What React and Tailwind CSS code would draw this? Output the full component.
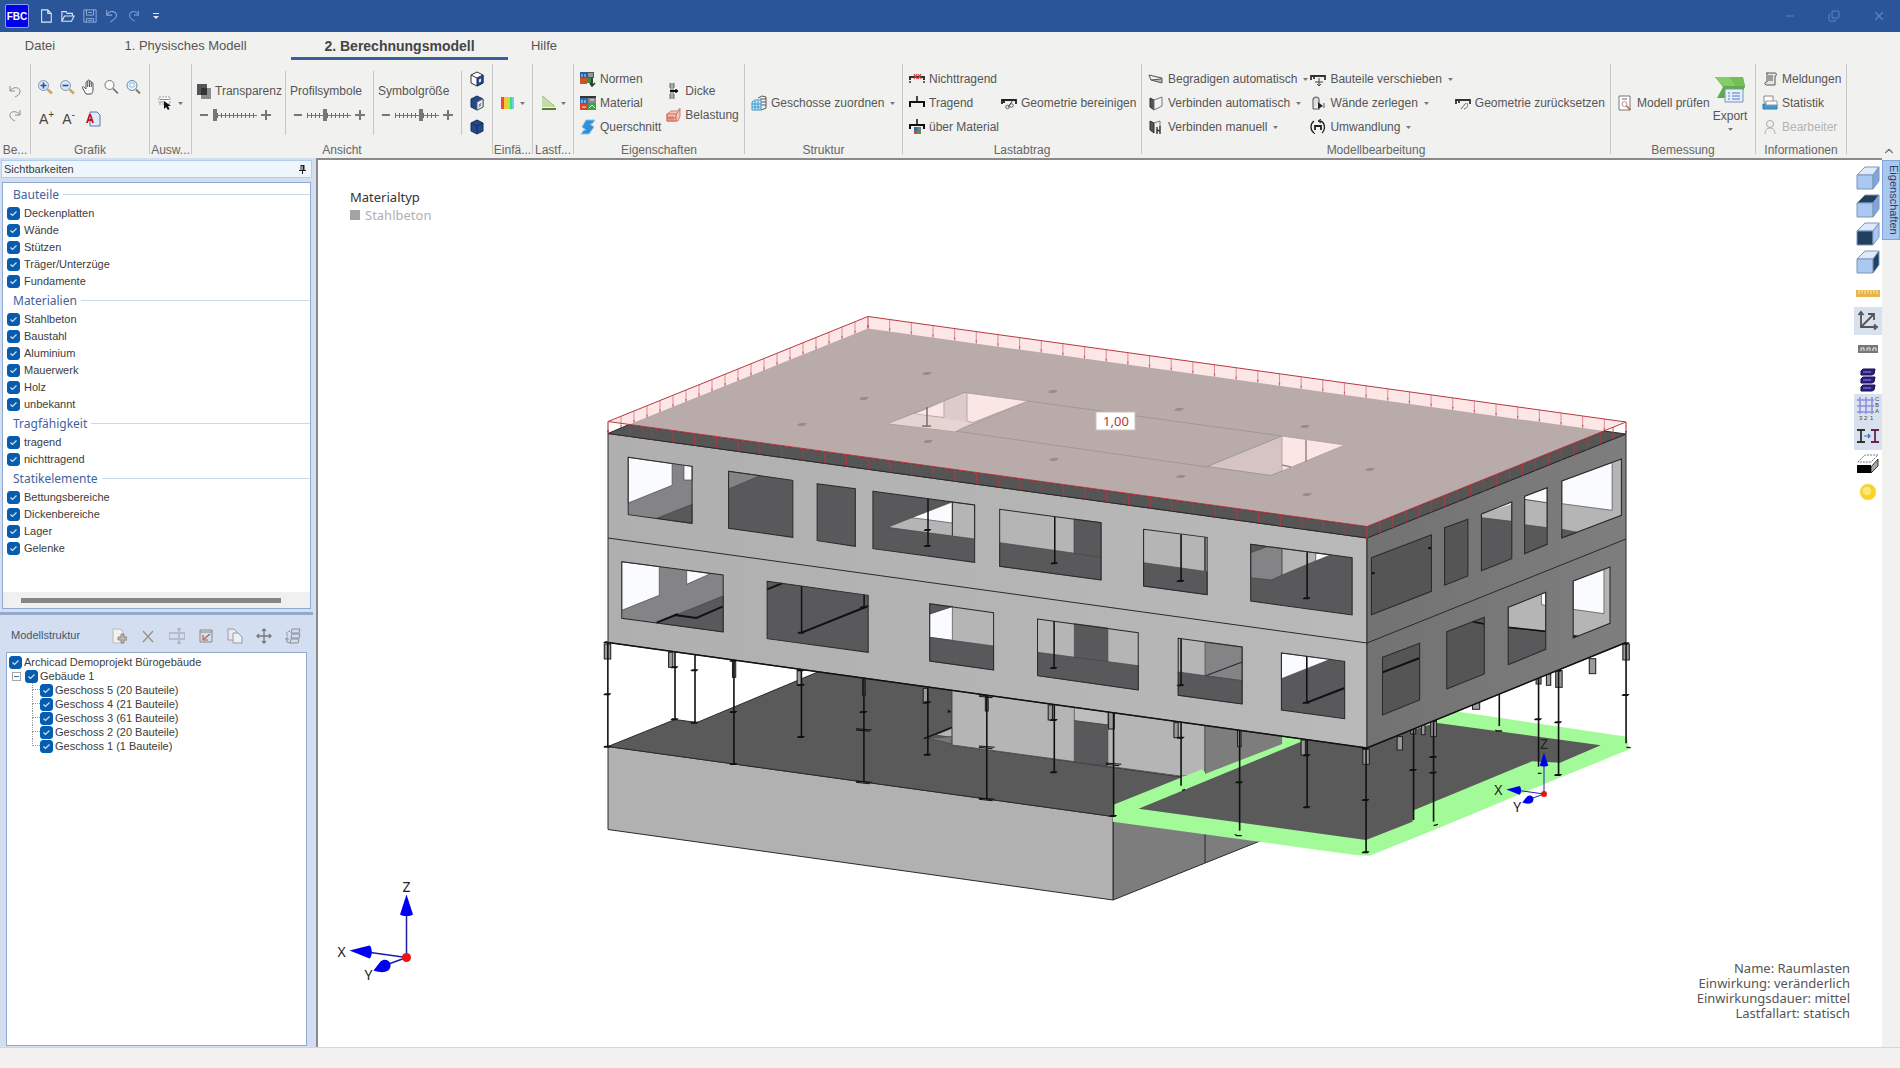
import { useState } from 'react';
import { ChevronUp, Copy, Minus, X } from 'lucide-react';

const DARK = '#59595b';
const MID = '#848486';
const LIGHT = '#b5b5b6';
const SKY = '#fafbff';
const LINE = '#2a2a2a';

/* ---------- small icons ---------- */

function Icon({ size = 16, children }) {
  return (
    <svg
      width={size}
      height={size}
      viewBox="0 0 16 16"
      fill="none"
      stroke="#666"
      strokeWidth="1"
      className="shrink-0"
      aria-hidden="true"
    >
      {children}
    </svg>
  );
}

const icons = {
  file: <path d="M3 1h7l4 4v10H3zM10 1v4h4" stroke="#dfe8f5" strokeWidth="1.2" />,
  open: <path d="M1 14V3h5l1 2h6v3M1 14L4 8h11l-3 6z" stroke="#dfe8f5" strokeWidth="1.2" />,
  save: <path d="M1 1h14v14H1zM4 1v6h8V1M4 15v-4h8v4M6 13h4M6 4h4" stroke="#9db6dc" />,
  undoLight: <path d="M2 1v6h6M2 7c3-6 12-5 11 1c-.5 3-4 5-7 7" stroke="#8ba9d6" strokeWidth="1.2" />,
  redoLight: <path d="M13 2v5H8M13 7C11 1 2 2 3 8c.5 3 4 5 6 6" stroke="#7398cf" strokeWidth="1.2" />,
  undo: <path d="M3 3v5h5M3 8c3-5 11-4 10 1c-.5 3-3 4-5 5" stroke="#8c8c8c" />,
  redo: <path d="M13 3v5H8M13 8C10 3 2 4 3 9c.5 3 3 4 5 5" stroke="#8c8c8c" />,
  zoomIn: (
    <>
      <path d="M10.500 10.500l4.500 4" stroke="#caa763" strokeWidth="2.600" />
      <circle cx="6.500" cy="6.500" r="5" fill="#d6e6fa" stroke="#8797b5" />
      <path d="M3.500 6.500h6M6.500 3.500v6" stroke="#2b4f9c" strokeWidth="1.600" />
    </>
  ),
  zoomOut: (
    <>
      <path d="M10.500 10.500l4.500 4" stroke="#caa763" strokeWidth="2.600" />
      <circle cx="6.500" cy="6.500" r="5" fill="#d6e6fa" stroke="#8797b5" />
      <path d="M3.500 6.500h6" stroke="#2b4f9c" strokeWidth="1.600" />
    </>
  ),
  hand: (
    <path
      d="M5 15L1.500 9c-.5-1.500 1-2 2-.5L5 10V3.500c0-1.300 1.700-1.300 1.700 0V2c0-1.300 1.800-1.300 1.800 0v1c0-1.300 1.800-1.300 1.800 0v1.500c0-1.200 1.700-1.200 1.700 0V11c0 2-1 3-1.500 4zM6.700 3.500V8M8.500 3v5M10.300 4v4"
      fill="#f8f8f8"
      stroke="#555"
    />
  ),
  zoom: (
    <>
      <circle cx="6.500" cy="6" r="4.500" fill="#fafafa" stroke="#777" />
      <path d="M10 9.500l5 5" stroke="#666" strokeWidth="1.600" />
    </>
  ),
  zoomFit: (
    <>
      <circle cx="7" cy="6.500" r="5" fill="#e6f3fb" stroke="#6487a8" />
      <path d="M4.500 6.500h5M7 4v5" stroke="#fff" strokeWidth="1.500" />
      <path d="M5 4h4v4H5z" stroke="#8fc0dd" />
      <path d="M11 10.500l4 4" stroke="#8a7a60" strokeWidth="2" />
    </>
  ),
  fontColor: (
    <>
      <path d="M5 1h7l3 3v11H5z" fill="#dfe9fa" stroke="#5a76b8" />
      <path d="M1 12L4 3h2l3 9H7l-.5-2h-3L3 12zM4 8h2L5 5z" fill="#c01818" stroke="none" />
    </>
  ),
  select: (
    <>
      <path d="M1 2h11v7H1z" stroke="#999" strokeDasharray="2 1" fill="#fff" />
      <path d="M2 4.500h9M2 7h4" stroke="#888" />
      <path d="M6 6v8l2-2 2 3 1.500-1-1.500-3h3z" fill="#111" stroke="none" />
    </>
  ),
  transparency: (
    <>
      <path d="M5 5h10v11H5z" fill="#8c8c8c" stroke="none" />
      <path d="M1 1h10v11H1z" fill="#555" stroke="none" />
      <path d="M5 5h6v7H5z" fill="#333" stroke="none" />
    </>
  ),
  cubeOpen: (
    <>
      <path d="M2 4l6-3 6 3v8l-6 3-6-3z" fill="#fff" stroke="#333" />
      <path d="M8 7l6-3v8l-6 3z" fill="#2a4d8c" stroke="#1b3059" />
      <path d="M10 8.500l2-1v3l-2 1z" fill="#e8eefa" stroke="none" />
      <path d="M2 4l6 3" stroke="#333" />
    </>
  ),
  cubeHalf: (
    <>
      <path d="M2 4l6-3 6 3v8l-6 3-6-3z" fill="#214a8e" stroke="#172f58" />
      <path d="M8 7l6-3v8l-6 3z" fill="#e9edf5" />
      <path d="M10 9l2 2m0-3l-2 4" stroke="#777" />
    </>
  ),
  cubeFull: (
    <>
      <path d="M2 4l6-3 6 3v8l-6 3-6-3z" fill="#214a8e" stroke="#172f58" />
      <path d="M2 4l6 3 6-3M8 7v8" stroke="#172f58" />
    </>
  ),
  rainbow: (
    <>
      <path d="M1 2h3v12H1z" fill="#f0483c" stroke="none" />
      <path d="M4 2h3v12H4z" fill="#f7c531" stroke="none" />
      <path d="M7 2h3v12H7z" fill="#a7ee3c" stroke="none" />
      <path d="M10 2h2v12h-2z" fill="#3fd98c" stroke="none" />
      <path d="M12 2h2v12h-2z" fill="#6cd0e8" stroke="none" />
    </>
  ),
  loadCase: (
    <>
      <path d="M2 1v11M4 3v9M6 5v7M8 6v6M10 8v4M12 9v3M2 1l12 11" stroke="#9bc567" />
      <path d="M1 13h14v2H1z" fill="#5c7a3c" stroke="none" />
    </>
  ),
  norms: (
    <>
      <path d="M0 1h7v6H0z" fill="#2c5f9e" stroke="none" />
      <path d="M7 1h7v6H7z" fill="#555" stroke="none" />
      <path d="M0 7h7v6H0z" fill="#c9552d" stroke="none" />
      <path d="M7 7h6v5H7z" fill="#3c8c46" stroke="none" />
      <path d="M8 3h5M8 5h5M2 3v3M5 3v3" stroke="#cfd8e6" />
      <path d="M12 7v8M10 12l2 3 3-3" stroke="#1c3d22" strokeWidth="1.600" />
    </>
  ),
  material: (
    <>
      <path d="M0 1h16v2H0z" fill="#333" stroke="none" />
      <path d="M0 3h8v6H0z" fill="#2c6bb0" stroke="none" />
      <path d="M8 3h8v5H8z" fill="#888" stroke="none" />
      <path d="M0 9h8v6H0z" fill="#d4472a" stroke="none" />
      <path d="M8 8h8v7H8z" fill="#3aa544" stroke="none" />
      <path d="M9 13l3-3 3 3M2 5v3M5 5v3M10 5h4M2 12h4" stroke="#e8eef4" />
    </>
  ),
  section: (
    <path d="M6 1h9l-3 4h-2l4 3-5 7H1l3-4h2L2 8z" fill="#2f8fd8" stroke="#8cc4ee" />
  ),
  thickness: (
    <>
      <path d="M5 0h4v16H5z" fill="#a9a9a9" stroke="none" />
      <path d="M5 8h8" stroke="#111" strokeWidth="2" />
      <path d="M5 0v5M5 11v5M9 0v5M9 11v5" stroke="#666" />
      <path d="M11 6v4" stroke="#111" strokeWidth="1.500" />
    </>
  ),
  load: (
    <>
      <path d="M2 7l4-3h6l3-3v8l-2 5H2z" fill="#f3c4bd" stroke="#d98174" />
      <path d="M2 7h9v7H2zM11 7l4-4M4 9v4M6 9v4M8 9v4M2 11h9" stroke="#d06a5b" />
    </>
  ),
  storeys: (
    <>
      <path d="M7 3l4-2 4 1v11l-5 2" fill="#f4f4f4" stroke="#555" />
      <path d="M9 4h6M9 7h6M9 10h6" stroke="#555" />
      <path d="M1 7l3-2h6v10H1z" fill="#cfe8fa" stroke="#3f95cc" />
      <path d="M1 9h9M1 12h9M4 6v9M7 6v9" stroke="#3f95cc" />
    </>
  ),
  nonBearing: (
    <>
      <path d="M0 6h16M1 7v2M15 7v2" stroke="#333" strokeWidth="2" />
      <path d="M1 10v2M15 10v2" stroke="#333" strokeWidth="1.500" />
      <path d="M5 3l3 5M8 3L5 8M9 3l3 5M12 3L9 8" stroke="#e04545" strokeWidth="1.300" />
    </>
  ),
  bearing: (
    <>
      <path d="M1 12V7h14v5" stroke="#111" strokeWidth="2" />
      <path d="M8 7V1" stroke="#111" strokeWidth="1.500" />
    </>
  ),
  byMaterial: (
    <>
      <path d="M1 10V6h14v4" stroke="#111" strokeWidth="2" />
      <path d="M8 6V0" stroke="#111" strokeWidth="1.500" />
      <path d="M5 8h3v4H5z" fill="#2c6bb0" stroke="none" />
      <path d="M8 8h4v4H8z" fill="#777" stroke="none" />
      <path d="M5 12h3v3H5z" fill="#d4472a" stroke="none" />
      <path d="M8 12h4v3H8z" fill="#3aa544" stroke="none" />
    </>
  ),
  cleanGeometry: (
    <>
      <path d="M1 9V5h14v4M3 5v3" stroke="#222" strokeWidth="1.800" />
      <path d="M12 5L7 12" stroke="#333" />
      <circle cx="6.500" cy="12" r="1.800" />
      <circle cx="10.500" cy="10.500" r="1.800" />
    </>
  ),
  straighten: <path d="M1 4l13 3v5L3 9l10-1M3 9l-2-5" fill="#bbb" stroke="#555" />,
  connectAuto: (
    <>
      <path d="M2 3l4 2v10l-4-3z" fill="#555" stroke="#333" />
      <path d="M6 5l8-3v9l-8 4z" fill="#f3f3f3" stroke="#777" />
    </>
  ),
  connectManual: (
    <>
      <path d="M2 2l4 2v10l-4-3z" fill="#555" stroke="#333" />
      <path d="M6 4l6-2v6" stroke="#777" />
      <path d="M9 15V8M9 11l3 1v3M12 7v8" stroke="#333" strokeWidth="1.400" />
    </>
  ),
  move: (
    <>
      <path d="M1 9V5h14v4M4 5v3" stroke="#333" strokeWidth="1.800" />
      <path d="M9 7v8M5 11h8M7 13l2 2 2-2" stroke="#444" />
    </>
  ),
  split: (
    <>
      <path d="M3 14V5c0-3 5-4 6-1v4" fill="#ddd" stroke="#777" strokeWidth="1.300" />
      <path d="M8 7v7l5-3z" fill="#222" stroke="none" />
      <path d="M14 8v5M3 14h7" stroke="#555" />
    </>
  ),
  convert: (
    <>
      <path d="M4 2C0 5 0 11 4 14M9 2c6 0 7 8 3 12" stroke="#222" strokeWidth="1.300" />
      <path d="M11 4L8 2l3-2M2 12l3 3" stroke="#222" />
      <path d="M5 11V7h6v4" stroke="#222" strokeWidth="1.800" />
    </>
  ),
  resetGeometry: (
    <>
      <path d="M1 9V5h14v4M4 5v3" stroke="#333" strokeWidth="1.800" />
      <path d="M6 14l5-6M9 14c4-1 4-4 3-6" stroke="#666" />
    </>
  ),
  check: (
    <>
      <path d="M2 1h11v14H2z" fill="#fff" stroke="#777" />
      <circle cx="7.500" cy="9" r="2.500" stroke="#b98a7e" />
      <path d="M9.500 11l4 4" stroke="#cc5a48" strokeWidth="1.600" />
      <path d="M5 4h5" />
    </>
  ),
  messages: (
    <>
      <path d="M4 2h9c2 0 2 3 0 3v9H5c-3 0-3-3 0-3h0V2" fill="#e6e6e6" stroke="#555" />
      <path d="M6 5h5M6 7h5M6 9h5" stroke="#555" />
    </>
  ),
  stats: (
    <>
      <path d="M2 1h9v6H2z" fill="#fff" stroke="#888" />
      <path d="M1 9h14v5H1z" fill="#3c9bd2" stroke="#2f7fb0" />
      <path d="M4 6h11v4H4z" fill="#fff" stroke="#999" />
    </>
  ),
  person: (
    <>
      <circle cx="8" cy="5" r="3.500" stroke="#aaa" />
      <path d="M3 15c0-4 2-6 5-6s5 2 5 6" stroke="#aaa" />
    </>
  ),
  newItem: (
    <>
      <path d="M2 1h7l3 3v11H2z" fill="#f4f2ef" stroke="#bdb6b0" />
      <path d="M10 6h3v3h3v3h-3v3h-3v-3H7V9h3z" fill="#b9b3ae" stroke="#8f8a86" />
    </>
  ),
  remove: <path d="M3 3l10 11M13 3L3 14" stroke="#9c9691" strokeWidth="1.500" />,
  rename: <path d="M9 5H0v6h9M11 5h5v6h-5M10 1v14M8 1h4M8 15h4" stroke="#9a9aa2" />,
  restore: (
    <>
      <path d="M2 2h12v12H2zM2 4h12" stroke="#8d8886" />
      <path d="M12 6L6 11M5 7v5h5" stroke="#b0604a" strokeWidth="1.200" />
    </>
  ),
  copy: (
    <>
      <path d="M1 1h6l3 3v8H1z" fill="#e8e9ee" stroke="#9a9aa2" />
      <path d="M6 5h5l4 4v6H6z" fill="#eef0f5" stroke="#9a9aa2" />
    </>
  ),
  moveAll: (
    <path d="M8 1v14M1 8h14M6 3l2-2 2 2M6 13l2 2 2-2M3 6L1 8l2 2M13 6l2 2-2 2" stroke="#77777f" strokeWidth="1.300" />
  ),
  stack: (
    <path
      d="M7 1h8l-1 4H6zM7 6h8l-1 4H6zM6 11h8l-1 4H5zM5 3C1 3 1 8 3 8M0 11h4M2 9v5l3 1"
      stroke="#8d8d96"
    />
  ),
};

function Caret() {
  return (
    <svg width="5" height="3" viewBox="0 0 5 3" className="shrink-0" aria-hidden="true">
      <path d="M0 0h5L2.500 3z" fill="#777" />
    </svg>
  );
}

function IconButton({ name, label, size = 16, caret }) {
  return (
    <button type="button" aria-label={label} className="flex items-center gap-1">
      <Icon size={size}>{icons[name]}</Icon>
      {caret && <Caret />}
    </button>
  );
}

/* ---------- ribbon ---------- */

function Group({ title, className, children }) {
  return (
    <section className={`flex shrink-0 ${className}`}>
      <div className="flex min-w-0 flex-1 flex-col">
        <div className="flex h-[78px] items-center">{children}</div>
        <h2 className="h-4 text-center leading-4 whitespace-nowrap text-[#666]">{title}</h2>
      </div>
      <div className="h-[90px] w-px bg-[#c6c6c6]" />
    </section>
  );
}

function Command({ icon, children, caret, disabled }) {
  return (
    <button
      type="button"
      disabled={disabled}
      className="flex h-6 items-center gap-1 whitespace-nowrap text-[#555] disabled:text-[#b4b4b4]"
    >
      <Icon>{icons[icon]}</Icon>
      <span>{children}</span>
      {caret && <span className="pl-[2px]"><Caret /></span>}
    </button>
  );
}

function ScaleSlider({ label, icon, initial, className }) {
  const [value, setValue] = useState(initial);
  const id = `scale-${label}`;

  return (
    <div className={`flex h-16 shrink-0 flex-col justify-center border-r border-[#c6c6c6] pl-1 ${className}`}>
      <label htmlFor={id} className="flex h-6 items-center gap-[3px] whitespace-nowrap text-[#555]">
        {icon && <Icon>{icons[icon]}</Icon>}
        {label}
      </label>
      <div className="flex h-6 items-center gap-1 pl-[3px]">
        <button type="button" aria-label={`${label} -`} onClick={() => setValue(Math.max(0, value - 1))}>
          <svg width="10" height="10" viewBox="0 0 10 10" aria-hidden="true">
            <path d="M1 5h8" stroke="#777" strokeWidth="2" />
          </svg>
        </button>
        <div className="grid w-[44px] items-center">
          <div className="col-start-1 row-start-1 h-[5px] bg-[repeating-linear-gradient(90deg,#666_0_1px,transparent_1px_4px)]">
            <div className="h-[3px] border-b border-[#777]" />
          </div>
          <input
            id={id}
            type="range"
            min="0"
            max="10"
            value={value}
            onChange={(e) => setValue(Number(e.target.value))}
            className="col-start-1 row-start-1 h-3 w-full appearance-none bg-transparent [&::-webkit-slider-thumb]:h-3 [&::-webkit-slider-thumb]:w-1 [&::-webkit-slider-thumb]:appearance-none [&::-webkit-slider-thumb]:bg-[#777]"
          />
        </div>
        <button type="button" aria-label={`${label} +`} onClick={() => setValue(Math.min(10, value + 1))}>
          <svg width="10" height="10" viewBox="0 0 10 10" aria-hidden="true">
            <path d="M5 0v10M0 5h10" stroke="#777" strokeWidth="2" />
          </svg>
        </button>
      </div>
    </div>
  );
}

function Ribbon() {
  return (
    <div className="flex items-start pt-1 text-[12px]">
      <Group title="Be..." className="w-[31px]">
        <div className="flex w-full flex-col items-center gap-2">
          <IconButton name="undo" label="Rückgängig" />
          <IconButton name="redo" label="Wiederholen" />
        </div>
      </Group>
      <Group title="Grafik" className="w-[119px]">
        <div className="flex flex-col gap-4 pl-1">
          <div className="flex gap-[6px] pl-[2px]">
            <IconButton name="zoomIn" label="Vergrößern" />
            <IconButton name="zoomOut" label="Verkleinern" />
            <IconButton name="hand" label="Verschieben" />
            <IconButton name="zoom" label="Lupe" />
            <IconButton name="zoomFit" label="Alles zeigen" />
          </div>
          <div className="flex items-center gap-2 pl-1 text-[14px] leading-4 text-[#444]">
            <button type="button" className="flex items-start">
              A<span className="text-[10px] leading-2">+</span>
            </button>
            <button type="button" className="flex items-start pr-[2px]">
              A<span className="text-[10px] leading-2">-</span>
            </button>
            <IconButton name="fontColor" label="Schriftfarbe" />
          </div>
        </div>
      </Group>
      <Group title="Ausw..." className="w-[42px]">
        <div className="flex w-full justify-center">
          <IconButton name="select" label="Auswahl" caret />
        </div>
      </Group>
      <Group title="Ansicht" className="w-[301px]">
        <div className="flex w-full items-center">
          <ScaleSlider label="Transparenz" icon="transparency" initial={0} className="w-[94px]" />
          <ScaleSlider label="Profilsymbole" initial={4} className="w-[88px]" />
          <ScaleSlider label="Symbolgröße" initial={6} className="w-[88px]" />
          <div className="flex flex-1 flex-col items-center gap-2">
            <IconButton name="cubeOpen" label="Drahtmodell" />
            <IconButton name="cubeHalf" label="Halbtransparent" />
            <IconButton name="cubeFull" label="Vollmodell" />
          </div>
        </div>
      </Group>
      <Group title="Einfä..." className="w-[40px]">
        <div className="flex w-full justify-center">
          <IconButton name="rainbow" label="Einfärben" caret />
        </div>
      </Group>
      <Group title="Lastf..." className="w-[41px]">
        <div className="flex w-full justify-center">
          <IconButton name="loadCase" label="Lastfall" caret />
        </div>
      </Group>
      <Group title="Eigenschaften" className="w-[171px]">
        <div className="flex items-center gap-1 pl-[6px]">
          <div>
            <Command icon="norms">Normen</Command>
            <Command icon="material">Material</Command>
            <Command icon="section">Querschnitt</Command>
          </div>
          <div>
            <Command icon="thickness">Dicke</Command>
            <Command icon="load">Belastung</Command>
          </div>
        </div>
      </Group>
      <Group title="Struktur" className="w-[158px]">
        <div className="pl-[6px]">
          <Command icon="storeys" caret>Geschosse zuordnen</Command>
        </div>
      </Group>
      <Group title="Lastabtrag" className="w-[239px]">
        <div className="flex items-center gap-[2px] pl-[6px]">
          <div>
            <Command icon="nonBearing">Nichttragend</Command>
            <Command icon="bearing">Tragend</Command>
            <Command icon="byMaterial">über Material</Command>
          </div>
          <Command icon="cleanGeometry">Geometrie bereinigen</Command>
        </div>
      </Group>
      <Group title="Modellbearbeitung" className="w-[469px]">
        <div className="flex items-center gap-[2px] pl-[6px]">
          <div>
            <Command icon="straighten" caret>Begradigen automatisch</Command>
            <Command icon="connectAuto" caret>Verbinden automatisch</Command>
            <Command icon="connectManual" caret>Verbinden manuell</Command>
          </div>
          <div>
            <Command icon="move" caret>Bauteile verschieben</Command>
            <Command icon="split" caret>Wände zerlegen</Command>
            <Command icon="convert" caret>Umwandlung</Command>
          </div>
          <Command icon="resetGeometry">Geometrie zurücksetzen</Command>
        </div>
      </Group>
      <Group title="Bemessung" className="w-[145px]">
        <div className="flex items-center gap-[3px] pl-[6px]">
          <Command icon="check">Modell prüfen</Command>
          <button type="button" className="flex flex-col items-center gap-1 leading-4 text-[#555]">
            <svg width="30" height="28" viewBox="0 0 30 28" aria-hidden="true">
              <path d="M0 1h14l3 1h11l2 9-6 11H2l6-11z" fill="#5fae45" />
              <path d="M0 1h15l6 9H8z" fill="#86cc68" />
              <path d="M15 1h13l2 9h-9z" fill="#73bf55" />
              <path d="M10 13h18v13H10z" fill="#e6eefb" stroke="#7f95b8" />
              <path d="M13 17h2M17 17h8M13 20h2M17 20h8M13 23h2M17 23h8" stroke="#4a79c0" />
            </svg>
            Export
            <Caret />
          </button>
        </div>
      </Group>
      <Group title="Informationen" className="w-[91px]">
        <div className="pl-[6px]">
          <Command icon="messages">Meldungen</Command>
          <Command icon="stats">Statistik</Command>
          <Command icon="person" disabled>Bearbeiter</Command>
        </div>
      </Group>
      <button type="button" aria-label="Menüband einklappen" className="mt-20 mr-1 ml-auto">
        <ChevronUp size={14} color="#777" />
      </button>
    </div>
  );
}

/* ---------- left side ---------- */

function CheckBox({ children }) {
  return (
    <label className="flex items-center gap-1 whitespace-nowrap">
      <span className="grid h-[13px] w-[13px] shrink-0">
        <input
          type="checkbox"
          defaultChecked
          className="peer col-start-1 row-start-1 h-[13px] w-[13px] appearance-none rounded-[3px] border border-[#005fb8] checked:bg-[#0a5cab]"
        />
        <svg
          viewBox="0 0 13 13"
          className="pointer-events-none invisible col-start-1 row-start-1 peer-checked:visible"
          aria-hidden="true"
        >
          <path d="M3.500 6.500l2 2 4-4" fill="none" stroke="#cfe3f7" strokeWidth="1.200" />
        </svg>
      </span>
      <span>{children}</span>
    </label>
  );
}

const visibility = [
  { title: 'Bauteile', items: ['Deckenplatten', 'Wände', 'Stützen', 'Träger/Unterzüge', 'Fundamente'] },
  { title: 'Materialien', items: ['Stahlbeton', 'Baustahl', 'Aluminium', 'Mauerwerk', 'Holz', 'unbekannt'] },
  { title: 'Tragfähigkeit', items: ['tragend', 'nichttragend'] },
  { title: 'Statikelemente', items: ['Bettungsbereiche', 'Dickenbereiche', 'Lager', 'Gelenke'] },
];

const storeys = [
  'Geschoss 5 (20 Bauteile)',
  'Geschoss 4 (21 Bauteile)',
  'Geschoss 3 (61 Bauteile)',
  'Geschoss 2 (20 Bauteile)',
  'Geschoss 1 (1 Bauteile)',
];

const treeTools = [
  ['newItem', 'Neu'],
  ['remove', 'Löschen'],
  ['rename', 'Umbenennen'],
  ['restore', 'Zurücksetzen'],
  ['copy', 'Kopieren'],
  ['moveAll', 'Verschieben'],
  ['stack', 'Geschosse'],
];

function Sidebar() {
  return (
    <aside className="flex w-[316px] shrink-0 flex-col bg-[#d3dff0] pr-[3px] text-[11px] text-[#3c3c3c]">
      <header className="mx-px mt-[2px] flex h-[18px] shrink-0 items-center justify-between border border-[#b3cdec] bg-[#eff5fc] pr-1 pl-[2px]">
        <h2>Sichtbarkeiten</h2>
        <button type="button" aria-label="Anheften">
          <svg width="9" height="9" viewBox="0 0 9 9" aria-hidden="true">
            <path d="M2.500 0h4v5h1.500v1H5v3H4V6H1V5h1.500z" fill="#222" />
            <path d="M4 1v4" stroke="#fff" />
          </svg>
        </button>
      </header>
      <div className="mx-[2px] mt-1 flex h-[427px] shrink-0 flex-col justify-between border border-[#8fa9d2] bg-white pt-px">
        <div>
          {visibility.map((group) => (
            <fieldset key={group.title} className="pl-1">
              <legend className="flex h-[21px] w-full items-center gap-1 pl-[6px] font-['Noto_Sans',sans-serif] text-[12px] text-[#3f62a0]">
                {group.title}
                <span className="h-px flex-1 bg-[#ccd8e6]" />
              </legend>
              {group.items.map((item) => (
                <div key={item} className="flex h-[17px] items-center">
                  <CheckBox>{item}</CheckBox>
                </div>
              ))}
            </fieldset>
          ))}
        </div>
        <div className="flex h-4 items-center bg-[#f0f0f0] pr-[29px] pl-[18px]">
          <div className="h-[5px] flex-1 bg-[#868686]" />
        </div>
      </div>
      <div className="mt-[3px] h-[3px] shrink-0 bg-[#93a9cf]" />
      <div className="flex h-[37px] shrink-0 items-center justify-between pt-1 pr-[12px] pl-[11px] text-[#44546e]">
        <h2>Modellstruktur</h2>
        <div className="flex gap-[13px]">
          {treeTools.map(([name, label]) => (
            <IconButton key={name} name={name} label={label} />
          ))}
        </div>
      </div>
      <div className="mr-[6px] mb-px ml-[6px] flex-1 border border-[#8fa9d2] bg-white pt-[2px] pl-[2px]">
        <ul>
          <li className="[&_label]:h-[14px] [&_label]:gap-[2px]">
            <CheckBox>Archicad Demoprojekt Bürogebäude</CheckBox>
            <ul>
              <li>
                <div className="flex items-center gap-1 pl-[3px]">
                  <button
                    type="button"
                    aria-label="Zuklappen"
                    className="flex h-[9px] w-[9px] items-center justify-center border border-[#a6a6a6] bg-white"
                  >
                    <span className="h-px w-[5px] bg-[#4a6ea8]" />
                  </button>
                  <CheckBox>Gebäude 1</CheckBox>
                </div>
                <ul className="pl-[23px]">
                  {storeys.map((storey, index) => (
                    <li key={storey} className="flex">
                      <span className="w-2">
                        <span className="block h-[7px] border-b border-l border-dotted border-[#999]" />
                        {index < storeys.length - 1 && (
                          <span className="block h-[7px] border-l border-dotted border-[#999]" />
                        )}
                      </span>
                      <CheckBox>{storey}</CheckBox>
                    </li>
                  ))}
                </ul>
              </li>
            </ul>
          </li>
        </ul>
      </div>
    </aside>
  );
}

/* ---------- 3D model ---------- */

// Evenly spaced load arrows along one edge of the roof
function LoadTicks({ from, to, count }) {
  return Array.from({ length: count + 1 }, (_, i) => {
    const x = from[0] + ((to[0] - from[0]) * i) / count;
    const y = from[1] + ((to[1] - from[1]) * i) / count;
    return (
      <g key={i}>
        <path d={`M${x} ${y}v12`} />
        <path d={`M${x - 1} ${y + 9}h2l-1 3z`} fill="currentColor" stroke="none" />
      </g>
    );
  });
}

function Opening({ points, fill = DARK, children }) {
  return (
    <g>
      <polygon points={points} fill={fill} />
      {children}
      <polygon points={points} fill="none" stroke={LINE} strokeWidth="3" />
    </g>
  );
}

function Face({ points, fill, edge }) {
  return <polygon points={points} fill={fill} stroke={edge ? '#444' : 'none'} strokeWidth="2" />;
}

function Column({ x, from, to, pads = [], wide = [] }) {
  return (
    <g stroke="#111" fill="#111">
      <path d={`M${x} ${from}V${to}`} strokeWidth="4.500" />
      {pads.map((y) => (
        <path key={y} d={`M${x - 13} ${y + 1}l5 -4h18l-5 6h-15z`} stroke="none" />
      ))}
      {wide.map((y) => (
        <path key={y} d={`M${x - 22} ${y - 4}l44 4M${x - 22} ${y}l38 4`} strokeWidth="3" fill="none" />
      ))}
    </g>
  );
}

function Hanger({ x, y, w = 12, h = 45 }) {
  return <rect x={x} y={y} width={w} height={h} fill="#9a9a9c" stroke="#222" strokeWidth="3" />;
}

function Axes({ x, y, scale }) {
  const s = (n) => n * scale;
  return (
    <g>
      <g transform={`translate(${x} ${y}) scale(${scale})`}>
        <path d="M0 0V-45M0 0L-36 -5M0 0L-22 8" stroke="#1c1ca8" strokeWidth="1.500" />
        <path d="M0 -63l6.500 20c-3 2 -10 2 -13 0z" fill="#0000f0" />
        <path d="M-57 -7l20 -5c3 2 3 11 0 13z" fill="#0000f0" />
        <path d="M-33 13l7 -9c5 -4 11 0 10 5c-1 6 -8 7 -17 4z" fill="#0000f0" />
        <circle r="4.500" fill="#f01010" />
      </g>
      <g fontFamily="Noto Sans, sans-serif" fontSize="14" fill="#222" textAnchor="middle">
        <text x={x} y={y + s(-63) - 3}>Z</text>
        <text x={x + s(-57) - 8} y={y + s(-7) + 6}>X</text>
        <text x={x + s(-33) - 5} y={y + s(13) + 9}>Y</text>
      </g>
    </g>
  );
}

const roofPads = [
  [927, 373], [1053, 391], [864, 398], [802, 424], [928, 441], [1054, 459],
  [1179, 409], [1305, 426], [1370, 469], [1307, 494], [1181, 476],
];

function Model() {
  return (
    <svg viewBox="318 160 1564 887" className="h-full w-full" role="img" aria-label="Berechnungsmodell">
      <defs>
        <linearGradient id="front" x1="0" x2="1">
          <stop offset="0" stopColor="#afafaf" />
          <stop offset="1" stopColor="#b9b9b9" />
        </linearGradient>
        <linearGradient id="side" x1="0" x2="1">
          <stop offset="0" stopColor="#727272" />
          <stop offset="1" stopColor="#7e7e7e" />
        </linearGradient>
      </defs>

      {/* basement */}
      <polygon points="1113,816 1260,841 1113,900" fill="#7d7d7d" stroke={LINE} />
      <path d="M1205 834v29" stroke={LINE} />
      <polygon points="608,746.500 1113,816.500 1113,900 608,829.500" fill="#b1b1b1" stroke={LINE} />

      {/* ground floor slab and inner walls */}
      <polygon
        points="608,746.500 675,719.500 697,722.500 819,671.500 952,690 952,745 1182,777 1113,816.500"
        fill="#5a5a5a"
        stroke={LINE}
      />
      <polygon points="952,680 1205,720 1205,776 1180,776 952,745" fill={LIGHT} stroke="#555" />
      <polygon points="1205,715 1290,730 1282,745 1205,778" fill="#7d7d7d" stroke="#555" />

      <g transform="translate(590 620) scale(.35714 .33333)">
        <Face points="1356,262 1450,275 1450,315 1356,302" fill="#bdbdbd" edge />
        <Face points="1356,302 1450,315 1450,437 1356,427" fill={DARK} edge />
        <Face points="968,345 1013,325 1013,352" fill={LIGHT} edge />
        <Face points="945,354 1013,350 1013,372" fill="#777" edge />
        <path d="M935 356L1013 322" stroke="#111" strokeWidth="4" />
        <path d="M1000 276h10M1002 270l8 6" stroke="#111" strokeWidth="3" />
        <Hanger x={40} y={72} w={18} />
        <Hanger x={220} y={97} />
        <Hanger x={399} y={122} w={9} h={50} />
        <Hanger x={580} y={150} />
        <Hanger x={763} y={176} w={8} h={50} />
        <Hanger x={933} y={205} />
        <Hanger x={1107} y={228} w={8} />
        <Hanger x={1283} y={255} />
        <Hanger x={1452} y={275} w={16} h={52} />
        <Column x={50} from={67} to={380} pads={[67, 223, 380]} />
        <Column x={238} from={95} to={298} pads={[142, 298]} />
        <Column x={294} from={103} to={308} pads={[151, 308]} />
        <Column x={403} from={120} to={432} pads={[122, 276, 432]} />
        <Column x={592} from={150} to={351} pads={[151, 195, 351]} />
        <Column x={767} from={175} to={487} pads={[276]} wide={[330, 487]} />
        <Column x={946} from={203} to={404} pads={[247, 404]} />
        <Column x={1111} from={228} to={538} wide={[229, 382, 538]} />
        <Column x={1300} from={255} to={457} pads={[300, 457]} />
      </g>

      {/* highlighted load area */}
      <g transform="translate(1100 640) scale(.35714 .33333)">
        <polygon
          points="36,495 285,388 294,396 294,402 510,312 510,285 745,310 985,212 1475,290 1482,328 1290,412 940,568 755,647 715,645 36,545"
          fill="#a2fb98"
        />
        <polygon
          points="108,506 575,300 745,315 940,248 1402,316 1288,368 1210,364 880,510 875,545 745,600"
          fill="#5a5a5a"
        />
        <Hanger x={207} y={248} />
        <Hanger x={385} y={270} w={10} h={50} />
        <Hanger x={563} y={300} />
        <Hanger x={736} y={328} w={18} />
        <Hanger x={832} y={290} w={15} h={40} />
        <Hanger x={870} y={262} w={14} h={20} />
        <Hanger x={900} y={248} w={10} h={36} />
        <Hanger x={926} y={240} w={16} h={50} />
        <Hanger x={1043} y={186} w={20} h={22} />
        <Hanger x={1221} y={112} w={14} h={20} />
        <Hanger x={1250} y={102} w={12} h={34} />
        <Hanger x={1276} y={92} w={18} h={50} />
        <Hanger x={1370} y={56} w={18} />
        <Hanger x={1464} y={12} w={18} h={48} />
        <Column x={38} from={218} to={530} pads={[528]} wide={[373]} />
        <Column x={227} from={247} to={437} pads={[293]} />
        <Column x={391} from={270} to={572} pads={[427]} />
        <Column x={580} from={300} to={502} pads={[346, 502]} />
        <Column x={745} from={323} to={637} pads={[325, 480, 637]} />
        <Column x={878} from={265} to={540} pads={[390]} />
        <Column x={934} from={243} to={545} pads={[243, 351, 398]} />
        <Column x={1118} from={160} to={258} />
        <Column x={1228} from={115} to={380} pads={[238]} />
        <Column x={1284} from={92} to={405} pads={[92, 247, 405]} />
        <Column x={1473} from={10} to={310} pads={[10, 165]} />
        <path
          d="M378 583l5 4h14M230 452l8-4M934 557l12-4M1226 400h10M1107 270l5 3h14M1474 322l12 1"
          fill="none"
          stroke="#111"
          strokeWidth="4"
        />
      </g>

      {/* facades */}
      <polygon points="608,433.500 1367,538 1367,748 608,642.500" fill="url(#front)" stroke={LINE} />
      <polygon points="1367,538 1626,434 1626,642.500 1367,748" fill="url(#side)" stroke={LINE} />
      <path d="M608 538L1367 643L1626 539" fill="none" stroke={LINE} />
      <path d="M608 642.500L1367 748L1626 642.500" fill="none" stroke="#111" strokeWidth="1.500" />

      {/* openings, left half of the front */}
      <g transform="translate(590 300) scale(.33801 .33333)">
        <Opening points="113,472 302,499 302,670 113,644" fill={MID}>
          <Face points="113,472 243,491 243,556 113,609" fill={SKY} edge />
          <Face points="278,496 302,499 302,540 278,540" fill={SKY} edge />
          <Face points="197,655 302,613 302,670" fill={DARK} edge />
        </Opening>
        <Opening points="410,514 600,541 600,712 410,685">
          <Face points="410,514 503,527 410,567" fill={MID} edge />
        </Opening>
        <Opening points="672,551 785,566 785,739 672,722" />
        <Opening points="837,574 1138,615 1138,787 837,746">
          <Face points="880,682 1068,606 1138,615 1138,717" fill={LIGHT} edge />
          <Face points="952,653 1072,606 1072,669" fill={SKY} edge />
          <path d="M1072 606V707" stroke={LINE} strokeWidth="3" />
          <Column x={1000} from={597} to={738} pads={[690, 738]} />
        </Opening>
        <Opening points="1212,628 1512,668 1512,840 1212,799" fill={LIGHT}>
          <Face points="1212,728 1512,771 1512,840 1212,799" fill={DARK} edge />
          <Face points="1432,657 1512,668 1512,771 1432,760" fill={DARK} edge />
          <Column x={1375} from={650} to={790} pads={[790]} />
        </Opening>
        <Opening points="94,785 394,825 394,996 94,955" fill={MID}>
          <Face points="94,785 205,800 205,886 94,931" fill={SKY} edge />
          <Face points="286,811 356,821 286,853" fill={SKY} edge />
          <Face points="197,968 394,888 394,996" fill={DARK} edge />
          <path d="M250 945L315 954L392 920M197 968L260 942" fill="none" stroke="#111" strokeWidth="6" />
        </Opening>
        <Opening points="524,844 823,886 823,1057 524,1016">
          <path d="M626 998L823 918M524 868L568 850" stroke="#111" strokeWidth="6" />
          <Column x={626} from={858} to={998} pads={[998]} />
          <Column x={811} from={884} to={922} pads={[922]} />
        </Opening>
        <Opening points="1005,911 1194,938 1194,1110 1005,1083" fill={LIGHT}>
          <Face points="1005,942 1072,918 1072,1021 1005,1012" fill={SKY} edge />
          <Face points="1005,911 1072,920 1005,942" fill={DARK} edge />
          <Face points="1005,1012 1194,1038 1194,1110 1005,1083" fill={DARK} edge />
        </Opening>
        <Opening points="1324,957 1622,998 1622,1170 1324,1127" fill={LIGHT}>
          <Face points="1433,971 1532,984 1532,1087 1433,1073" fill={DARK} edge />
          <Face points="1324,1057 1622,1097 1622,1170 1324,1127" fill={DARK} edge />
          <Column x={1373} from={963} to={1104} pads={[1104]} />
        </Opening>
      </g>

      {/* openings, right half of the front and the side */}
      <g transform="translate(1100 400) scale(.35714 .33333)">
        <Opening points="122,388 300,412 300,584 122,558" fill={LIGHT}>
          <Face points="122,488 300,515 300,584 122,558" fill={DARK} edge />
          <path d="M294 412V514" stroke={LINE} strokeWidth="4" />
          <Column x={227} from={403} to={543} pads={[543]} />
        </Opening>
        <Opening points="422,433 706,473 706,645 422,603">
          <Face points="422,433 510,446 510,525 480,540 422,533" fill={MID} edge />
          <Face points="510,446 645,464 510,525" fill={LIGHT} edge />
          <Face points="604,459 645,465 604,483" fill={SKY} edge />
          <Face points="422,433 468,440 422,458" fill={DARK} edge />
          <Column x={580} from={457} to={595} pads={[595]} />
        </Opening>
        <Opening points="219,715 398,741 398,912 219,886" fill={LIGHT}>
          <Face points="294,727 398,741 398,842 294,828" fill={MID} edge />
          <path d="M294 828L398 786" stroke={LINE} strokeWidth="3" />
          <Face points="219,816 398,842 398,912 219,886" fill={DARK} edge />
          <Column x={227} from={716} to={856} pads={[856]} />
        </Opening>
        <Opening points="508,759 685,784 685,956 508,930">
          <Face points="508,759 645,778 508,836" fill={SKY} edge />
          <path d="M579 908L685 864" stroke="#111" strokeWidth="6" />
          <Column x={579} from={768} to={908} pads={[908]} />
        </Opening>

        <Opening points="760,473 928,404 928,574 760,644" fill="#555">
          <path d="M760 515v8h9v-6zM928 440v8h-9v-6z" fill="#111" />
        </Opening>
        <Opening points="965,383 1030,358 1030,528 965,556" fill="#555" />
        <Opening points="1068,342 1153,306 1153,476 1068,512">
          <Face points="1068,342 1153,306 1153,364 1068,353" fill={LIGHT} edge />
          <Face points="1080,337 1153,306 1153,312" fill={SKY} />
        </Opening>
        <Opening points="1189,289 1252,263 1252,433 1189,461">
          <Face points="1189,298 1252,308 1252,383 1189,374" fill={LIGHT} edge />
          <Face points="1189,289 1252,263 1252,308 1189,298" fill={SKY} edge />
        </Opening>
        <Opening points="1293,243 1460,177 1460,346 1293,414" fill={LIGHT}>
          <Face points="1293,243 1434,187 1434,331 1293,311" fill={SKY} edge />
          <Face points="1293,388 1337,397 1293,414" fill={DARK} edge />
        </Opening>
        <Opening points="791,772 895,730 895,900 791,945" fill="#555">
          <path d="M791 817L895 774" stroke="#111" strokeWidth="6" />
        </Opening>
        <Opening points="971,695 1076,652 1076,822 971,867" fill="#555">
          <path d="M1043 665L1076 672" stroke="#111" strokeWidth="5" />
        </Opening>
        <Opening points="1143,622 1248,577 1248,748 1143,794">
          <Face points="1143,622 1248,577 1248,694 1143,682" fill={LIGHT} edge />
          <path d="M1143 682L1248 694" stroke="#111" strokeWidth="5" />
          <Face points="1236,582 1248,577 1248,617 1236,613" fill={SKY} edge />
        </Opening>
        <Opening points="1325,543 1428,501 1428,670 1325,714" fill={LIGHT}>
          <Face points="1325,543 1411,508 1411,641 1325,628" fill={SKY} edge />
          <Face points="1325,705 1342,707 1325,714" fill="#111" />
        </Opening>
      </g>

      {/* roof slab below the load plane */}
      <polygon points="608,421.500 868,316.500 1626,422 1367,526.500" fill="#fce6e6" />
      <polygon points="608,421.500 608,433.500 629,424.500" fill="#fff" />
      <polygon points="1626,422 1626,434 1604,431" fill="#fff" />
      <polygon points="608,433.500 629,424.500 1367,526.500 1604,431 1626,434 1367,538" fill="#555" stroke={LINE} />
      <polygon points="629,424.500 868,328.500 1604,431 1367,526.500" fill="#b9abaa" />
      <path d="M1028 401L1282 436M955 431L1207 467" stroke="#a39796" />
      {roofPads.map(([x, y]) => (
        <path key={x} d={`M${x - 5} ${y + 1}l3 -2h7l-3 3h-5z`} fill="#988d8c" />
      ))}

      <polygon points="889,423.500 964,392.500 1028,401 955,431.500" fill="#dccbca" stroke="#a39796" />
      <polygon points="967,393 1028,401 973,422.500 967,421" fill="#fbe6e6" stroke="#b9a5a4" />
      <polygon points="914,414 944,401 944,417.500" fill="#fbe6e6" stroke="#b9a5a4" />
      <polygon points="889,423.500 914,414 971,422.500 955,431.500" fill="#e6d4d3" />
      <path d="M927 407v20M922 426h9" stroke="#7c6f6e" strokeWidth="1.500" />

      <polygon points="1207,466.500 1282,436 1345,445 1271,475.500" fill="#d5c4c3" stroke="#a39796" />
      <polygon points="1282,436 1345,445 1282,471" fill="#fbe6e6" stroke="#b9a5a4" />
      <path d="M1306 440v22M1282 465l9 2" stroke="#9a8786" strokeWidth="1.500" />

      {/* area load */}
      <g fill="none" stroke="#b8383f" strokeWidth="1" className="text-[#a8323a]">
        <g strokeOpacity=".5" fillOpacity=".5">
          <LoadTicks from={[608, 421.5]} to={[868, 316.5]} count={20} />
          <LoadTicks from={[868, 316.5]} to={[1626, 422]} count={35} />
        </g>
        <g strokeOpacity=".85">
          <LoadTicks from={[608, 421.5]} to={[1367, 526.5]} count={35} />
          <LoadTicks from={[1367, 526.5]} to={[1626, 422]} count={20} />
        </g>
        <polygon points="608,421.500 868,316.500 1626,422 1367,526.500" />
      </g>
      <rect x="1096" y="412" width="39" height="18" fill="#fff" stroke="#cfc0c0" />
      <text x="1116" y="426" textAnchor="middle" fontFamily="Noto Sans, sans-serif" fontSize="13" fill="#c0303a">
        1,00
      </text>

      <Axes x={1544} y={794} scale={0.66} />
      <Axes x={406.5} y={957.5} scale={1} />
    </svg>
  );
}

/* ---------- view toolbar ---------- */

function Cube({ top = '#dceafb', front = '#a9c8f2', right = '#7ea6da' }) {
  return (
    <svg width="26" height="26" viewBox="0 0 26 26" aria-hidden="true">
      <g stroke="#7f97b8" strokeLinejoin="round">
        <path d="M2 10L10 2h14l-6 8z" fill={top} />
        <path d="M2 10h16v14H2z" fill={front} />
        <path d="M18 10l6-8v14l-6 8z" fill={right} />
      </g>
    </svg>
  );
}

const viewTools = [
  [
    { label: 'Isometrie', art: <Cube /> },
    { label: 'Draufsicht', art: <Cube top="#21405f" /> },
    { label: 'Vorderansicht', art: <Cube front="#21405f" right="#a9c8f2" /> },
    { label: 'Seitenansicht', art: <Cube right="#21405f" /> },
  ],
  [
    {
      label: 'Bemaßung',
      art: (
        <svg width="24" height="9" viewBox="0 0 24 9" aria-hidden="true">
          <path d="M0 1h24v7H0z" fill="#e9b44c" />
          <path d="M3 1v4M6 1v3M9 1v4M12 1v3M15 1v4M18 1v3M21 1v4" stroke="#fbe7b8" />
        </svg>
      ),
    },
    {
      label: 'Koordinatensystem',
      active: true,
      art: (
        <svg width="22" height="22" viewBox="0 0 22 22" fill="none" stroke="#555" strokeWidth="1.800" aria-hidden="true">
          <path d="M4 3v14h14M4 17L16 5" />
          <path d="M11 4h6v6M1.500 5L4 2l2.500 3M17 14.500l3 2.500-3 2.500" />
        </svg>
      ),
    },
    {
      label: 'Linienlasten',
      art: (
        <svg width="20" height="10" viewBox="0 0 20 10" aria-hidden="true">
          <path d="M0 1h20v8H0z" fill="#777" />
          <path d="M3 7V4h3v3M9 7V4h3v3M15 7V4h3v3" fill="none" stroke="#eee" />
        </svg>
      ),
    },
  ],
  [
    {
      label: 'Geschosse',
      art: (
        <svg width="18" height="24" viewBox="0 0 18 24" fill="#2a1f86" stroke="#120c4a" aria-hidden="true">
          <path d="M2 3l2-2h12l-1 5-2 1H2zM2 11l2-2h12l-1 5-2 1H2zM2 19l2-2h12l-1 5-2 1H2z" />
          <path d="M4 4h8M4 12h8M4 20h8" stroke="#8d84e0" />
        </svg>
      ),
    },
    {
      label: 'Raster',
      active: true,
      art: (
        <svg width="26" height="26" viewBox="0 0 26 26" aria-hidden="true">
          <path d="M5 2v17M11 2v17M17 2v17M2 5h17M2 11h17M2 17h17" stroke="#8c8ce0" strokeWidth="1.500" />
          <g fontFamily="Liberation Sans, sans-serif" fontSize="6" fill="#444">
            <text x="20" y="6">C</text>
            <text x="20" y="12">B</text>
            <text x="20" y="18">A</text>
            <text x="4" y="25">3</text>
            <text x="9" y="25">2</text>
            <text x="15" y="25">1</text>
          </g>
        </svg>
      ),
    },
    {
      label: 'Profile',
      active: true,
      art: (
        <svg width="24" height="16" viewBox="0 0 24 16" fill="none" strokeWidth="1.800" aria-hidden="true">
          <path d="M1 2h8M1 14h8M5 2v12" stroke="#333" />
          <path d="M15 2h8M15 14h8M19 2v12" stroke="#6a2450" />
          <path d="M8 8h6M12 6l2 2-2 2" stroke="#3d6cc0" strokeWidth="1.200" />
        </svg>
      ),
    },
    {
      label: 'Schnitt',
      art: (
        <svg width="24" height="22" viewBox="0 0 24 22" aria-hidden="true">
          <path d="M2 9l7-7h13l-7 7z" fill="#fff" stroke="#777" strokeDasharray="2 1" />
          <path d="M15 14l7-8v7l-7 7z" fill="#aaa" stroke="#333" />
          <path d="M1 12h14v8H1z" fill="#000" />
        </svg>
      ),
    },
    {
      label: 'Beleuchtung',
      art: (
        <svg width="18" height="18" viewBox="0 0 18 18" aria-hidden="true">
          <circle cx="9" cy="9" r="8" fill="#fbd22a" stroke="#f3e38a" />
          <circle cx="8" cy="8" r="4" fill="#fdeb7c" />
        </svg>
      ),
    },
  ],
];

function ViewToolbar() {
  return (
    <div className="absolute top-1 right-0 flex flex-col gap-[3px]">
      {viewTools.map((group, index) => (
        <div key={index}>
          {group.map((tool) => (
            <button
              key={tool.label}
              type="button"
              aria-label={tool.label}
              aria-pressed={tool.active}
              className="flex h-7 w-7 items-center justify-center aria-pressed:bg-[#d8e2ef]"
            >
              {tool.art}
            </button>
          ))}
        </div>
      ))}
    </div>
  );
}

function Viewport() {
  return (
    <main className="relative min-w-0 flex-1 border-t-2 border-l-2 border-[#8a8a8a] bg-white font-['Noto_Sans',sans-serif]">
      <div className="absolute inset-0">
        <Model />
      </div>
      <div className="absolute top-7 left-8 text-[13px] leading-[18px]">
        <p className="text-[#333]">Materialtyp</p>
        <p className="flex items-center gap-[5px] text-[#b0b0b0]">
          <span className="h-[10px] w-[10px] bg-[#a3a3a3]" />
          Stahlbeton
        </p>
      </div>
      <ViewToolbar />
      <div className="absolute right-8 bottom-[26px] text-right text-[13px] leading-[15px] text-[#555]">
        <p>Name: Raumlasten</p>
        <p>Einwirkung: veränderlich</p>
        <p>Einwirkungsdauer: mittel</p>
        <p>Lastfallart: statisch</p>
      </div>
    </main>
  );
}

/* ---------- window ---------- */

const tabs = [
  { title: 'Datei', className: 'w-[80px]' },
  { title: '1. Physisches Modell', className: 'w-[211px]' },
  { title: '2. Berechnungsmodell', className: 'w-[217px]' },
  { title: 'Hilfe', className: 'w-[72px]' },
];

export default function App() {
  const [activeTab, setActiveTab] = useState(2);

  return (
    <div className="flex h-screen flex-col overflow-hidden bg-[#f1f1f0] font-['Liberation_Sans',Arial,sans-serif]">
      <header className="flex h-8 shrink-0 items-center justify-between bg-[#2a5699] pr-[14px] pl-[5px]">
        <div className="flex items-center gap-2">
          <div className="mr-[2px] flex h-6 w-6 items-center justify-center rounded-[2px] border border-[#8d9df0] bg-[#0000ea] text-[10px] font-bold text-white">
            FBC
          </div>
          <IconButton name="file" label="Neu" size={14} />
          <IconButton name="open" label="Öffnen" size={14} />
          <IconButton name="save" label="Speichern" size={14} />
          <IconButton name="undoLight" label="Rückgängig" size={14} />
          <IconButton name="redoLight" label="Wiederholen" size={14} />
          <button type="button" aria-label="Schnellzugriff anpassen" className="ml-1">
            <svg width="6" height="7" viewBox="0 0 6 7" aria-hidden="true">
              <path d="M0 0h6v1H0zM0 3h6L3 6z" fill="#dfe8f5" />
            </svg>
          </button>
        </div>
        <div className="flex items-center gap-8 text-[#6384bd]">
          <button type="button" aria-label="Minimieren"><Minus size={12} strokeWidth={2} /></button>
          <button type="button" aria-label="Wiederherstellen"><Copy size={12} strokeWidth={2} className="-scale-y-100" /></button>
          <button type="button" aria-label="Schließen"><X size={14} strokeWidth={2} /></button>
        </div>
      </header>

      <nav className="flex h-7 shrink-0 text-[13px] text-[#555]">
        {tabs.map((tab, index) => (
          <button
            key={tab.title}
            type="button"
            onClick={() => setActiveTab(index)}
            className={`${tab.className} ${
              index === activeTab
                ? 'border-b-[3px] border-[#3a5f9b] pt-[3px] text-[14px] font-bold text-[#444]'
                : ''
            }`}
          >
            {tab.title}
          </button>
        ))}
      </nav>

      <div className="h-[98px] shrink-0">
        <Ribbon />
      </div>

      <div className="flex min-h-0 flex-1 border-b border-[#d6d6d6]">
        <Sidebar />
        <Viewport />
        <div className="w-[18px] shrink-0 pt-[2px]">
          <button
            type="button"
            className="h-20 w-full border border-[#7fa6dc] bg-[#a8c8f0] pl-1 text-[11px] leading-none text-[#2b3f66] [writing-mode:vertical-rl]"
          >
            Eigenschaften
          </button>
        </div>
      </div>
      <footer className="h-5 shrink-0 bg-[#f2f1f0]" />
    </div>
  );
}
